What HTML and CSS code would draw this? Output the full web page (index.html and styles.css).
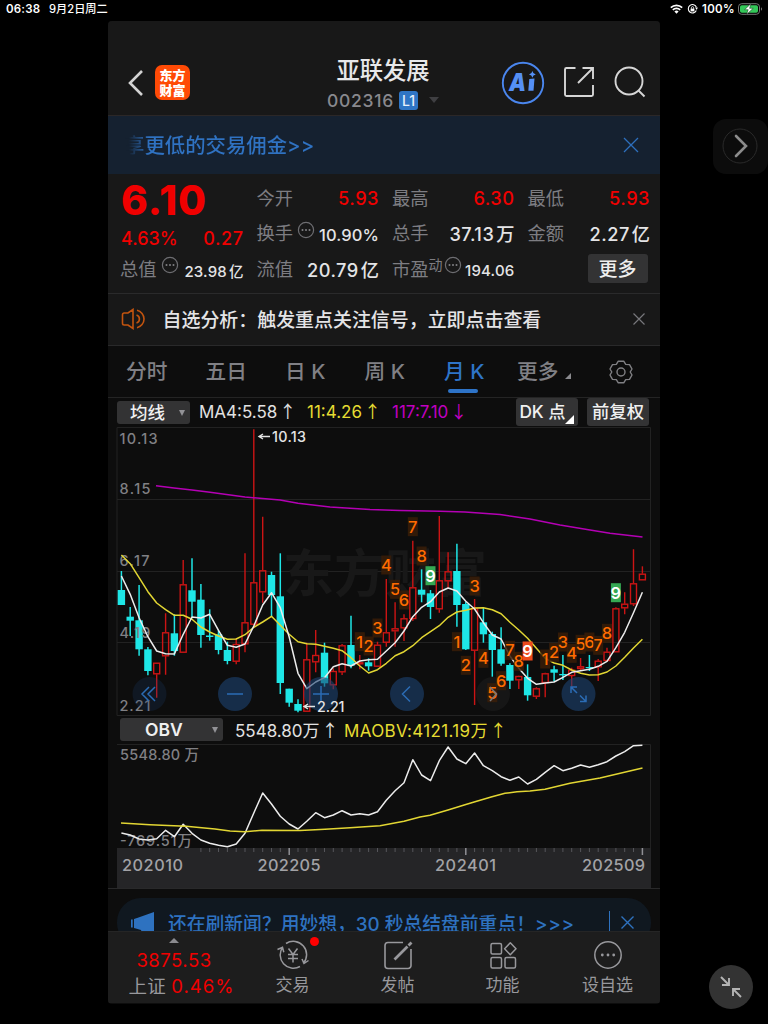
FILE: index.html
```html
<!DOCTYPE html>
<html lang="zh-CN">
<head>
    <meta charset="UTF-8">
    <meta name="viewport" content="width=device-width, initial-scale=1.0">
    <title>亚联发展 002316</title>
    <link rel="stylesheet" href="styles.css">
</head>
<body>
    <!-- Status bar -->
    <div class="status">
        <span class="status-time">06:38</span>
        <span class="status-date">9月2日周二</span>
        <svg class="wifi" width="13" height="10" viewBox="0 0 13 10" fill="none" stroke="#fff" stroke-width="1.6">
            <path d="M0.8 3.7a8.2 8.2 0 0 1 11.4 0M2.8 5.9a5.3 5.3 0 0 1 7.4 0"/>
            <path d="M4.4 7.6a3 3 0 0 1 4.2 0L6.5 9.8z" fill="#fff" stroke="none"/>
        </svg>
        <svg class="lock" width="11" height="10" viewBox="0 0 11 10" fill="none" stroke="#fff">
            <path d="M9.3 6.6A4.2 4.2 0 1 1 9.4 3.2" stroke-width="1.1"/>
            <path d="M8 3.6h2.8L9.8 6z" fill="#fff" stroke="none"/>
            <rect x="3.6" y="4.6" width="3.8" height="2.8" fill="#fff" stroke="none"/>
            <path d="M4.4 4.8V3.7a1.1 1.1 0 0 1 2.2 0v1.1" stroke-width=".8"/>
        </svg>
        <span class="status-pct">100%</span>
        <svg width="25" height="12" viewBox="0 0 25 12">
            <rect x=".5" y=".7" width="21" height="10.6" rx="3.2" fill="none" stroke="#777"/>
            <rect x="2" y="2.2" width="18" height="7.6" rx="1.8" fill="#34c759"/>
            <path d="M23 4.2c1.4.6 1.4 3 0 3.6z" fill="#777"/>
            <path d="M13 0.6L6.6 6.7h3.6L8.6 11.4L15.2 5.3h-3.6z" fill="#fff" stroke="#0a2a12" stroke-width=".5"/>
        </svg>
    </div>

    <div class="app">
        <!-- Header -->
        <header class="header">
            <svg class="back" width="16" height="26" viewBox="0 0 16 26" fill="none" stroke="#d2d2d2" stroke-width="2.6"><path d="M14 1L2 13l12 12"/></svg>
            <div class="logo"><span>东方</span><span>财富</span></div>
            <div class="title">
                <h1>亚联发展</h1>
                <div class="code">002316<b>L1</b><i></i></div>
            </div>
            <svg class="ai" width="44" height="44" viewBox="0 0 44 44">
                <circle cx="22" cy="22" r="20.2" fill="none" stroke="#4a86ee" stroke-width="1.9"/>
                <text x="8" y="29.500" class="ai-text" textLength="17" lengthAdjust="spacingAndGlyphs">A</text>
                <path d="M28.3 18l5.2-.6-1 12.400h-5.2z" fill="#5590f5"/>
                <path d="M31.4 10q.5 2.9 3.4 3.4q-2.9.5-3.4 3.4q-.5-2.9-3.4-3.4q2.9-.5 3.4-3.4z" fill="#5590f5"/>
            </svg>
            <svg class="share" width="32" height="32" viewBox="0 0 32 32" fill="none" stroke="#d6d6d6" stroke-width="1.9">
                <path d="M12.5 2H3.5A1.5 1.5 0 0 0 2 3.5v25A1.5 1.5 0 0 0 3.5 30h25a1.5 1.5 0 0 0 1.5-1.5V19M19.5 2H30v11M29.5 2.5L15 17"/>
            </svg>
            <svg class="search" width="32" height="32" viewBox="0 0 32 32" fill="none" stroke="#d6d6d6" stroke-width="1.9">
                <circle cx="15" cy="15" r="13.5"/><path d="M24.500 24.500l6 6"/>
            </svg>
        </header>

        <!-- Promo line -->
        <div class="promo">
            <p>享更低的交易佣金&gt;&gt;</p>
            <svg width="16" height="16" viewBox="0 0 16 16" stroke="#2d6fbd" stroke-width="1.3"><path d="M1 1l14 14M15 1L1 15"/></svg>
        </div>

        <!-- Quote -->
        <section class="quote">
            <div class="col">
                <strong class="price red">6.10</strong>
                <div class="change red"><span>4.63%</span><span>0.27</span></div>
                <div class="cell small"><label>总值</label><svg class="dots" viewBox="0 0 18 18"><use href="#more"/></svg><span>23.98<em>亿</em></span></div>
            </div>
            <div class="col">
                <div class="cell"><label>今开</label><span class="red">5.93</span></div>
                <div class="cell small mid"><label>换手</label><svg class="dots" viewBox="0 0 18 18"><use href="#more"/></svg><span>10.90%</span></div>
                <div class="cell"><label>流值</label><span>20.79<em>亿</em></span></div>
            </div>
            <div class="col">
                <div class="cell"><label>最高</label><span class="red">6.30</span></div>
                <div class="cell"><label>总手</label><span>37.13<em>万</em></span></div>
                <div class="cell small"><label>市盈<sup>动</sup></label><svg class="dots tight" viewBox="0 0 18 18"><use href="#more"/></svg><span>194.06</span></div>
            </div>
            <div class="col">
                <div class="cell"><label>最低</label><span class="red">5.93</span></div>
                <div class="cell"><label>金额</label><span>2.27<em>亿</em></span></div>
                <div class="cell"><button class="more-btn">更多</button></div>
            </div>
        </section>

        <!-- Signal notice -->
        <div class="notice">
            <svg width="27" height="22" viewBox="0 0 27 22" fill="none" stroke="#c2540f" stroke-width="1.6">
                <path d="M12 1.5L7 5H3.2Q1.5 5 1.5 6.7v8.6Q1.5 17 3.2 17H7l5 3.5zM15.5 7a4.200 4.200 0 0 1 0 8M16 2.3a8.9 8.9 0 0 1 0 17.4"/>
            </svg>
            <p>自选分析：触发重点关注信号，立即点击查看</p>
            <svg width="12" height="12" viewBox="0 0 12 12" stroke="#77777b" stroke-width="1.2"><path d="M.5.5l11 11M11.5.5l-11 11"/></svg>
        </div>

        <!-- Period tabs -->
        <nav class="tabs">
            <span>分时</span>
            <span>五日</span>
            <span>日 K</span>
            <span>周 K</span>
            <span class="active">月 K</span>
            <span class="corner">更多</span>
            <svg width="26" height="26" viewBox="0 0 26 26" fill="none" stroke="#808084" stroke-width="1.4">
                <path d="M10.3 2.2h5.4l2 3.2 3.800.2 2.5 4.4-1.8 3 1.8 3-2.5 4.4-3.800.2-2 3.200h-5.400l-2-3.200-3.800-.2L2 16l1.800-3L2 10l2.500-4.400 3.800-.2z" stroke-linejoin="round"/>
                <circle cx="13" cy="13" r="4"/>
            </svg>
        </nav>

        <div class="bar ma-bar">
            <div class="select ma-select">均线</div>
            <span class="v-white">MA4:5.58<u>↑</u></span>
            <span class="v-yellow">11:4.26<u>↑</u></span>
            <span class="v-pink">117:7.10<u>↓</u></span>
            <div class="chip dk">DK 点</div>
            <div class="chip">前复权</div>
        </div>

        <svg class="kline" id="kline" width="552" height="289" viewBox="108 427 552 289"></svg>

        <div class="bar obv-bar">
            <div class="select obv-select">OBV</div>
            <span class="v-white">5548.80万<u>↑</u></span>
            <span class="v-yellow">MAOBV:4121.19万<u>↑</u></span>
        </div>

        <svg class="obv" id="obv" width="552" height="145" viewBox="108 744 552 145"></svg>

        <div class="ad-wrap">
            <div class="ad">
                <svg width="24" height="22" viewBox="0 0 24 22" fill="#2e72c0"><path d="M0 7.5h1.700v8H0zM3 7l4.500-1.500L23 0v21l-5-2-2 2.500-5-.5-1-3L3 16z"/></svg>
                <p>还在刷新闻？用妙想，30 秒总结盘前重点！<span>&gt;&gt;&gt;</span></p>
                <i></i>
                <svg width="13" height="13" viewBox="0 0 13 13" stroke="#2e72c0" stroke-width="1.4"><path d="M.5.5l12 12M12.5.5l-12 12"/></svg>
            </div>
        </div>

        <!-- Bottom bar -->
        <footer class="footer">
            <div class="index">
                <i></i>
                <span class="red">3875.53</span>
                <div>上证 <span class="red">0.46%</span></div>
            </div>
            <div class="item">
                <svg width="34" height="30" viewBox="0 0 34 30" fill="none" stroke="#98989c" stroke-width="1.5">
                    <path d="M10 3.5A13.3 13.3 0 0 1 27.2 23.5M24 26.5A13.3 13.3 0 0 1 6.8 7M1.5 9.5l5-2.3 1.3 5M32.5 20.5l-4.5 3-2-4.5"/>
                    <path d="M12.5 8.5l4.500 6 4.500-6M17 14.500v8M12 14.500h10M12 18.500h10"/>
                </svg>
                <b class="badge"></b>
                <span>交易</span>
            </div>
            <div class="item">
                <svg width="30" height="30" viewBox="0 0 30 30" fill="none" stroke="#98989c" stroke-width="1.6">
                    <path d="M20 2.5H5A3 3 0 0 0 2 5.5v20a3 3 0 0 0 3 3h20a3 3 0 0 0 3-3V9"/>
                    <path d="M11.5 19.5L24.5 6.5M25.500 5.500l3-3" stroke-width="2.8"/>
                </svg>
                <span>发帖</span>
            </div>
            <div class="item">
                <svg width="28" height="30" viewBox="0 0 28 30" fill="none" stroke="#98989c" stroke-width="1.5">
                    <rect x="2" y="3.5" width="10.5" height="10.5" rx="1.5"/>
                    <rect x="2" y="17.5" width="10.5" height="10.5" rx="1.5"/>
                    <rect x="16" y="17.5" width="10.5" height="10.5" rx="1.5"/>
                    <path d="M21.3 2.8l5.700 6-5.700 6-5.700-6z" stroke-linejoin="round"/>
                </svg>
                <span>功能</span>
            </div>
            <div class="item">
                <svg width="30" height="30" viewBox="0 0 30 30" fill="#98989c">
                    <circle cx="15" cy="15" r="13.2" fill="none" stroke="#98989c" stroke-width="1.5"/>
                    <circle cx="9.3" cy="15" r="1.4"/><circle cx="15" cy="15" r="1.4"/><circle cx="20.7" cy="15" r="1.4"/>
                </svg>
                <span>设自选</span>
            </div>
        </footer>
    </div>

    <!-- Floating controls -->
    <div class="next">
        <svg width="36" height="36" viewBox="0 0 36 36" fill="none"><circle cx="18" cy="18" r="17" stroke="#2a2a2a"/><path d="M14 8l10 10-10 10" stroke="#8c8c8c" stroke-width="2.6" stroke-linecap="round"/></svg>
    </div>
    <div class="shrink">
        <svg width="22" height="22" viewBox="0 0 22 22" fill="none" stroke="#b4b4b4" stroke-width="1.9"><path d="M1 1l8 8M9 2v7H2M21 21l-8-8M13 20v-7h7"/></svg>
    </div>

    <svg class="defs">
        <symbol id="more" viewBox="0 0 18 18">
            <circle cx="9" cy="9" r="7.6" fill="none" stroke="#6d6d71" stroke-width="1.2"/>
            <circle cx="5.5" cy="9" r="1" fill="#808084"/><circle cx="9" cy="9" r="1" fill="#808084"/><circle cx="12.5" cy="9" r="1" fill="#808084"/>
        </symbol>
    </svg>

    <script>
        const STEP = 8.83;
        const x = i => +(121.4 + i * STEP).toFixed(1);

        // up?, high, body top, body bottom, low
        const candles = [
            [0,571,590,605,605],[0,607,616.7,620.7,636],[0,585,620.3,649.3,655.7],[0,647,649.3,671,675.3],[1,662.7,662.7,674.3,697.7],
            [1,613.3,632.3,656.3,674.7],[0,614.3,633.3,651,655.7],[1,560,584.3,652.7,652.7],[0,558.3,590.3,601.7,618.3],[0,584,599.7,635,647.7],
            [0,609.3,635.5,637,640.7],[0,630.3,634.3,650,654.3],[0,641.7,650,661,664.3],[1,638.3,644,661.7,664.3],[1,553.3,622.3,644.3,652.3],
            [1,429.3,582.3,624.7,628],[1,516.7,570.3,592.3,602.7],[0,571.7,575,595,616.3],[0,553.3,596.3,683,694],[0,688.7,688.7,702.7,706.7],
            [0,699.3,704,710.7,712.3],[1,642.7,659.3,711.7,711.7],[1,630,655,662.3,672.3],[0,642.7,652.7,683.3,686.7],[1,668.3,671,685.3,689.3],
            [1,644,645.3,672.3,675],[0,615.7,645,665.7,668.3],[1,655,662.3,664.3,669.3],[0,658.3,662.3,666.3,670.7],[1,641.7,644.7,666.7,666.7],
            [1,579,632.3,642.7,646.7],[1,602.3,628.3,631.3,646.7],[1,614.3,618.3,628.3,641],[1,540.7,587.3,619,621],[0,569.3,589.7,594.7,602.3],
            [0,590,593.3,607,619],[1,516,580.3,609.3,612.7],[1,552.3,571.3,581.3,588.3],[0,543.7,571,605,626.7],[0,601.7,604,649.3,650],
            [1,599,608.3,650.7,705],[0,607.7,622.3,634.3,642.7],[0,631.7,634,650,676.7],[0,627.3,649.3,663.7,665.7],[0,663.3,665,680.7,689],
            [1,675.7,676,680.3,689],[0,664.3,677,695.3,700.7],[1,687.3,688.3,696.7,699],[1,672.7,673.3,683,697.3],[0,665.7,669.3,672.7,681.7],
            [0,655,674,675.3,680],[1,667.7,669.7,676,686.7],[1,658,666.3,669,671],[0,655,667,668.2,671],[1,659,660.7,667.3,681],
            [1,647.7,651.7,661,661.7],[1,607.3,608.3,652.3,652.3],[1,592.3,603.7,608.3,614.3],[1,549.3,583.3,604.3,606],[1,566.3,573.7,580.3,580.3]
        ];
        const ma4 = [576,594.3,617.7,636.7,651,653.7,654,634.3,617,618,614.3,630.3,645.3,647.3,644,626,605,592.7,607.7,637,673.3,688.7,682,677.7,666.7,663.7,666,661,659.7,659.3,651,642.7,631,616.7,607.3,601.7,592,588,591,601.3,609,622.7,635,639,656,668.3,678.3,684.3,683,682,677.3,672.3,670.7,669.3,666.3,661.3,647.7,632.3,612.7,592.3];
        const ma11 = [555,563.7,577.7,591.7,603,609.7,615.3,615.3,619.3,627,632,636,639.3,639,634.7,627.3,622,616.3,625.3,634.3,641.7,643.7,644.3,646.3,648.3,650.7,657.7,666,673,669.7,663.3,655.7,651.7,645.7,637.7,631.7,625.7,617.3,612,610.3,608,607.7,609.7,613.7,622.3,630,638.3,648.3,658.3,663,665.3,670,673.3,675,674.7,672,666,657.3,648,639.3];
        const ma117 = '156,485.7 174,488 192,490 210,492.3 245,497 280,500 298,503.3 330,507 370,509.5 400,510.5 440,511.3 465,512 500,514.5 530,519 560,525 590,530 610,533.3 642.5,537';
        const obv = [833,835,839,840,838.7,830.3,836.7,824.3,833.3,840,843.3,845.3,846.7,844,833.3,813,793,804,816.3,824,829,821.3,812.7,817.7,815,810.7,815,813.7,815,811.7,800.3,790.7,782.7,759.7,775,780.7,760.7,747,759,763.7,753,765.7,770.7,776.7,780.3,777,784,779.3,772.3,765.7,770.7,768.3,765,767.3,764.7,761.7,756,751.7,745.7,745.3];
        const maobv = '121,823 150,824.7 186,826.3 215,829 230,831 245,831.7 262,830.3 300,830.5 325,829.3 350,827.7 380,825.7 404,821.3 420,817 430,815.3 448,810 465,804.7 475,801.7 492,796.7 505,793.3 517,791.7 530,791 545,789.3 570,783.3 600,778 642.5,768';

        // candle index, digit, centre y, kind
        const marks = [
            [27,1,641.7],[28,2,646],[29,3,628],[30,4,565],[31,5,589.3],[32,6,600],[33,7,526.7],[34,8,556],[35,9,575.7,'sell'],
            [38,1,641.7],[39,2,665.3],[40,3,586],[41,4,658.3],[42,5,692.7],[43,6,680.7],[44,7,650.3],[45,8,661.3],[46,9,651,'buy'],
            [48,1,659],[49,2,652.3],[50,3,642],[51,4,653.3],[52,5,644.3],[53,6,642],[54,7,645.3],[55,8,633.3],[56,9,592.7,'sell']
        ];

        const points = ys => ys.map((y, i) => x(i) + ',' + y).join(' ');
        const line = (pts, cls) => `<polyline class="line ${cls}" points="${pts}"/>`;
        const text = (tx, ty, cls, s, len) => `<text x="${tx}" y="${ty}" class="${cls}"${len ? ` textLength="${len}"` : ''}>${s}</text>`;

        function drawKline() {
            let out = '<path class="grid" d="M117 427.5H650.5V715.5H117zM117 499.5H650M117 571.5H650M117 642.5H650"/>';
            out += text(283, 592, 'watermark', '东方财富', 204);
            candles.forEach(([up, h, t, b, l], i) => {
                const cx = x(i);
                if (up) {
                    out += `<path class="up" d="M${cx} ${h}V${t}M${cx} ${b}V${l}"/><rect class="up" x="${cx - 3}" y="${t + .5}" width="6" height="${Math.max(b - t - 1, 1)}"/>`;
                } else {
                    out += `<path class="down" d="M${cx} ${h}V${l}"/><rect class="down-body" x="${cx - 3.7}" y="${t}" width="7.4" height="${b - t}"/>`;
                }
            });
            out += text(119.5, 443.5, 'scale', '10.13', 38) + text(119.5, 494, 'scale', '8.15', 31) + text(119.5, 566, 'scale', '6.17', 30)
                + text(119.5, 638, 'scale', '4.19', 31) + text(119.5, 710.5, 'scale', '2.21', 31);
            out += line(ma117, 'pink') + line(points(ma11), 'yellow') + line(points(ma4), 'white');
            [[149.5, 'dim'], [235, ''], [321, ''], [407, ''], [493, 'grey'], [578.5, '']].forEach(([cx, cls]) => {
                out += `<circle class="knob ${cls}" cx="${cx}" cy="694" r="17"/>`;
            });
            marks.forEach(([i, n, y, kind]) => {
                out += `<rect class="mark ${kind || ''}" x="${x(i) - 5}" y="${y - 9.5}" width="10" height="19"/>` + text(x(i), y + 6, 'mark-text ' + (kind || ''), n);
            });
            out += `<path class="glyph" d="M149 687l-7 7 7 7M155 687l-7 7 7 7M227 694h16M313 694h16M321 686v16M410 686.5l-7.5 7.5 7.5 7.5"/>
                <path class="glyph" d="M571 693v-6h6M571 687l6 6M586 695.5v6h-6M586 701.5l-6-6"/>
                <path class="glyph grey" d="M490 687l6.5 7-6.5 7"/>`;
            out += '<path class="pointer" d="M259 436.5H270M263 434L259 436.5L263 439M304 706.5H315M308 704L304 706.5L308 709"/>';
            out += text(272, 441.5, 'extreme', '10.13', 34) + text(317, 711.5, 'extreme', '2.21', 27.5);
            document.getElementById('kline').innerHTML = out;
        }

        function drawObv() {
            let out = '<path class="grid" d="M117 744.5H650.5V848"/><rect x="117" y="848" width="534" height="40" class="axis"/>';
            for (let i = 9; i < 60; i++) {
                const major = i === 19 || i === 39 || i === 59;
                out += `<path class="${major ? 'tick major' : 'tick'}" d="M${x(i)} 848v${major ? 7 : 4}"/>`;
            }
            out += text(120, 760, 'scale', '5548.80 万', 79) + text(120, 845.5, 'scale', '-769.51万', 72);
            out += line(points(obv), 'white') + line(maobv, 'yellow');
            out += text(122, 871, 'date', '202010', 61) + text(257.5, 871, 'date', '202205', 63) + text(435, 871, 'date', '202401', 61) + text(582, 871, 'date', '202509', 63);
            out += '<path class="rule" d="M108 888.5H660"/>';
            document.getElementById('obv').innerHTML = out;
        }

        drawKline();
        drawObv();
    </script>
</body>
</html>
```

FILE: styles.css
```css
* {
    box-sizing: border-box;
}

body {
    margin: 0;
    width: 768px;
    height: 1024px;
    position: relative;
    overflow: hidden;
    background: #000;
    color: #e4e4e6;
    font-family: Inter, "Noto Sans CJK SC", sans-serif;
}

h1, p {
    margin: 0;
    font-weight: 500;
}

svg {
    display: block;
    flex: none;
}

i, em, u {
    font-style: normal;
    text-decoration: none;
}

.red {
    color: #f00000;
}

.defs {
    position: absolute;
    width: 0;
    height: 0;
}

/* status bar */
.status {
    display: flex;
    align-items: center;
    height: 21px;
    padding: 0 5px 3px 6px;
    color: #fff;
    font-size: 11.5px;
    font-weight: 600;
    line-height: 16px;
    white-space: nowrap;
}

.status-time {
    width: 43px;
    letter-spacing: .2px;
}

.status-date {
    flex: 1;
    font-size: 11.2px;
    font-weight: 500;
}

.lock {
    margin: 0 4px 0 4px;
}

.status-pct {
    width: 36px;
    letter-spacing: .3px;
}

/* app frame */
.app {
    width: 552px;
    height: 983px;
    margin-left: 108px;
    border-radius: 4px;
    overflow: hidden;
    background: #0d0d0d;
    white-space: nowrap;
}

.header {
    display: flex;
    align-items: flex-start;
    height: 95px;
    padding-left: 20px;
    background: #181818;
    border-bottom: 1px solid #2b2727;
}

.back {
    margin-top: 49px;
}

.logo {
    display: flex;
    flex-direction: column;
    justify-content: center;
    align-items: center;
    width: 35px;
    height: 35px;
    margin: 44px 0 0 11px;
    border-radius: 7px;
    background: #ff4a05;
    color: #fff;
    font: 900 13px/14.5px "Noto Sans CJK SC", sans-serif;
}

.title {
    width: 200px;
    margin: 34px 0 0 93px;
    text-align: center;
}

.title h1 {
    font-size: 23.3px;
    line-height: 32px;
    color: #e8e8ea;
}

.code {
    display: flex;
    justify-content: center;
    align-items: center;
    height: 26px;
    color: #89898e;
    font-size: 17.5px;
    font-weight: 500;
    letter-spacing: .7px;
}

.code b {
    width: 19px;
    height: 19px;
    margin-left: 5px;
    border-radius: 3px;
    background: #2f75c5;
    color: #e8f0fa;
    font-size: 14px;
    font-weight: 500;
    line-height: 19px;
    letter-spacing: 0;
}

.code i {
    margin-left: 11px;
    border: 5px solid transparent;
    border-top: 6px solid #3f3f42;
    border-bottom: 0;
}

.ai {
    margin: 40px 0 0 18px;
}

.ai-text {
    font: italic 900 25px Inter, sans-serif;
    fill: #5590f5;
}

.share {
    margin: 45px 0 0 18px;
}

.search {
    margin: 45px 0 0 19px;
}

.promo {
    display: flex;
    align-items: center;
    justify-content: space-between;
    height: 58px;
    padding: 0 21px 0 16px;
    background: #152130;
}

.promo p {
    padding-bottom: 2px;
    color: #2f72c2;
    font-size: 20.4px;
    background: linear-gradient(90deg, #152130 5px, #2f72c2 25px);
    background-clip: text;
    -webkit-background-clip: text;
    -webkit-text-fill-color: transparent;
}

/* quote */
.quote {
    display: grid;
    grid-template-columns: 122px 121px 121px 121px;
    column-gap: 14.5px;
    height: 119px;
    padding: 6px 11px 0 13px;
    background: #181818;
}

.cell {
    display: flex;
    align-items: center;
    justify-content: space-between;
    height: 35.5px;
    font-size: 18.2px;
    font-weight: 500;
}

.cell label {
    margin-left: -1px;
    padding-bottom: 2px;
    color: #7d7d82;
    font-weight: 400;
    font-size: 18.3px;
}

.cell span {
    letter-spacing: .5px;
    margin-right: -.5px;
}

.cell em {
    margin-left: 2px;
    letter-spacing: 0;
}

.cell.small span {
    font-size: 15px;
    letter-spacing: .2px;
    padding-top: 4px;
}

.cell.small em {
    font-size: 14.5px;
}

.cell.mid span {
    font-size: 16.5px;
    padding-top: 3px;
    letter-spacing: .1px;
}

.cell sup {
    font-size: 14px;
    line-height: 0;
    vertical-align: 6px;
}

.dots {
    width: 18px;
    height: 18px;
    margin: -7px auto 0 4px;
}

.dots.tight {
    margin-left: 1px;
}

.price {
    display: block;
    height: 42px;
    font-size: 40.5px;
    line-height: 41px;
    font-weight: 800;
    letter-spacing: 1px;
}

.change {
    display: flex;
    justify-content: space-between;
    height: 29px;
    font-size: 18px;
    line-height: 33px;
    font-weight: 500;
}

.change span + span {
    letter-spacing: .6px;
    margin-right: -.6px;
}

.more-btn {
    width: 60px;
    height: 29px;
    margin: -1px 2px 0 auto;
    padding: 0;
    border: 0;
    border-radius: 3px;
    background: #333334;
    color: #eee;
    font: 500 19px/28px "Noto Sans CJK SC", sans-serif;
}

.notice {
    display: flex;
    align-items: center;
    height: 53px;
    padding: 0 15px 0 13px;
    background: #181818;
    border-top: 1px solid #2a2a2b;
    border-bottom: 1px solid #29292a;
}

.notice svg {
    margin-top: -2px;
}

.notice p {
    flex: 1;
    margin-left: 14.5px;
    padding-bottom: 2px;
    font-size: 18.95px;
}

/* tabs */
.tabs {
    display: flex;
    align-items: center;
    height: 52px;
    padding-left: 18px;
    border-bottom: 1px solid #242424;
    color: #808085;
    font-size: 20.7px;
    font-weight: 500;
}

.tabs span {
    width: 79.500px;
    line-height: 51px;
}

.tabs .active {
    position: relative;
    width: 73px;
    color: #2e74c8;
}

.tabs .active::after {
    content: "";
    position: absolute;
    left: 4px;
    bottom: 4px;
    width: 30px;
    height: 4px;
    border-radius: 2px;
    background: #2e74c8;
}

.tabs .corner {
    width: 91px;
}

.corner::after {
    content: "";
    display: inline-block;
    margin-left: 7px;
    border-left: 6px solid transparent;
    border-bottom: 6px solid #8a8a8e;
}

.bar {
    display: flex;
    align-items: center;
    font-size: 17px;
}

.ma-bar {
    height: 29px;
    padding: 0 11px 1px 9px;
}

.obv-bar {
    height: 28px;
    padding: 0 0 1px 12px;
}

.select {
    position: relative;
    height: 23px;
    border-radius: 3px;
    background: #333334;
    color: #f0f0f0;
    font-size: 17.5px;
    font-weight: 500;
    line-height: 23px;
}

.select::after {
    content: "";
    position: absolute;
    right: 5px;
    top: 9px;
    border: 3.5px solid transparent;
    border-top: 6px solid #929296;
    border-bottom: 0;
}

.ma-select {
    width: 73px;
    padding-left: 13px;
    margin-right: 9px;
}

.obv-select {
    width: 103px;
    padding-left: 25px;
    margin-right: 12px;
    font-weight: 600;
}

.v-white {
    color: #e2e2e2;
}

.v-yellow {
    color: #e6dc32;
}

.v-pink {
    color: #c000c0;
}

.ma-bar .v-white {
    width: 108px;
}

.ma-bar .v-yellow {
    width: 85px;
}

.ma-bar .v-pink {
    flex: 1;
}

.obv-bar .v-white {
    width: 109px;
}

.obv-bar .v-yellow {
    letter-spacing: .35px;
}

.bar u {
    margin-left: 2px;
    font-family: "Noto Sans CJK SC", sans-serif;
    font-size: 17px;
    line-height: 1;
}

.chip {
    position: relative;
    width: 62px;
    height: 28px;
    border-radius: 3px;
    background: #333334;
    color: #f0f0f0;
    font-size: 17.3px;
    font-weight: 500;
    line-height: 28px;
    text-align: center;
}

.dk {
    margin-right: 9px;
    padding-right: 9px;
}

.dk::after {
    content: "";
    position: absolute;
    right: 4px;
    bottom: 2px;
    border-left: 9px solid transparent;
    border-bottom: 9px solid #fff;
}

/* charts */
.grid {
    fill: none;
    stroke: #222;
}

.watermark {
    font: 700 51px "Noto Sans CJK SC", sans-serif;
    fill: #181818;
}

.up {
    fill: none;
    stroke: #cc1414;
    stroke-width: 1.4;
}

.down {
    stroke: #1ee6e6;
    stroke-width: 1.5;
}

.down-body {
    fill: #1ee6e6;
}

.line {
    fill: none;
    stroke-width: 1.5;
    stroke-linejoin: round;
}

.line.white {
    stroke: #ececec;
}

.line.yellow {
    stroke: #e2d633;
}

.line.pink {
    stroke: #b400b4;
}

.scale {
    font: 500 14.5px Inter, "Noto Sans CJK SC", sans-serif;
    fill: #808084;
}

.extreme {
    font: 500 14.3px Inter, sans-serif;
    fill: #e4e4e4;
}

.pointer {
    fill: none;
    stroke: #e4e4e4;
    stroke-width: 1.4;
}

.mark {
    fill: #3a1d08;
    fill-opacity: .85;
}

.mark.sell {
    fill: #35a853;
    fill-opacity: 1;
}

.mark.buy {
    fill: #ee4a1c;
    fill-opacity: 1;
}

.mark-text {
    font: 500 16.5px Inter, sans-serif;
    fill: #ff6c00;
    text-anchor: middle;
}

.mark-text.sell, .mark-text.buy {
    fill: #fff;
    font-weight: 600;
}

.knob {
    fill: #1c4272;
    fill-opacity: .6;
}

.knob.dim {
    fill-opacity: .22;
}

.knob.grey {
    fill: #1c1c1c;
    fill-opacity: .6;
}

.glyph {
    fill: none;
    stroke: #2b6cb5;
    stroke-width: 1.5;
}

.glyph.grey {
    stroke: #77777a;
}

.axis {
    fill: #252527;
}

.tick {
    stroke: #55555a;
}

.tick.major {
    stroke: #909095;
    stroke-width: 1.5;
}

.date {
    font: 500 16.3px Inter, sans-serif;
    fill: #a2a2a6;
}

.rule {
    stroke: #29292a;
}

/* ad strip, cut by the bottom bar */
.ad-wrap {
    height: 42px;
    padding: 9px 9px 0;
    overflow: hidden;
}

.ad {
    display: flex;
    align-items: center;
    height: 49px;
    padding: 0 17px 0 14px;
    border-radius: 24px;
    background: #101820;
    color: #2e72c0;
}

.ad p {
    flex: 1;
    margin-left: 13px;
    padding-bottom: 1px;
    font-size: 18.8px;
}

.ad p span {
    letter-spacing: .7px;
}

.ad i {
    width: 1.5px;
    height: 24px;
    margin-right: 11px;
    background: #2e72c0;
}

/* bottom bar */
.footer {
    display: flex;
    height: 72px;
    background: #1d1d1d;
    border-top: 1px solid #252525;
    color: #98989c;
    font-size: 17px;
}

.index {
    width: 132px;
    display: flex;
    flex-direction: column;
    align-items: center;
    font-size: 18.5px;
    letter-spacing: .5px;
}

.index i {
    margin: 6px 0 0;
    border: 5px solid transparent;
    border-top: 0;
    border-bottom: 5px solid #8a8a8e;
}

.index > span {
    line-height: 34px;
}

.index > div {
    padding-left: 15px;
    line-height: 18px;
    letter-spacing: .2px;
}

.index > div .red {
    letter-spacing: 1px;
}

.item {
    position: relative;
    display: flex;
    flex-direction: column;
    align-items: center;
    width: 105px;
    padding-top: 8px;
    line-height: 30px;
}

.badge {
    position: absolute;
    left: 70px;
    top: 5px;
    width: 9px;
    height: 9px;
    border-radius: 50%;
    background: #f00;
}

/* floating controls */
.next {
    position: absolute;
    left: 713px;
    top: 119px;
    width: 55px;
    height: 55px;
    padding: 9px;
    border-radius: 13px;
    background: #0c0c0c;
}

.shrink {
    position: absolute;
    left: 709px;
    top: 965px;
    width: 44px;
    height: 44px;
    padding: 11px;
    border-radius: 50%;
    background: #333;
}
```
